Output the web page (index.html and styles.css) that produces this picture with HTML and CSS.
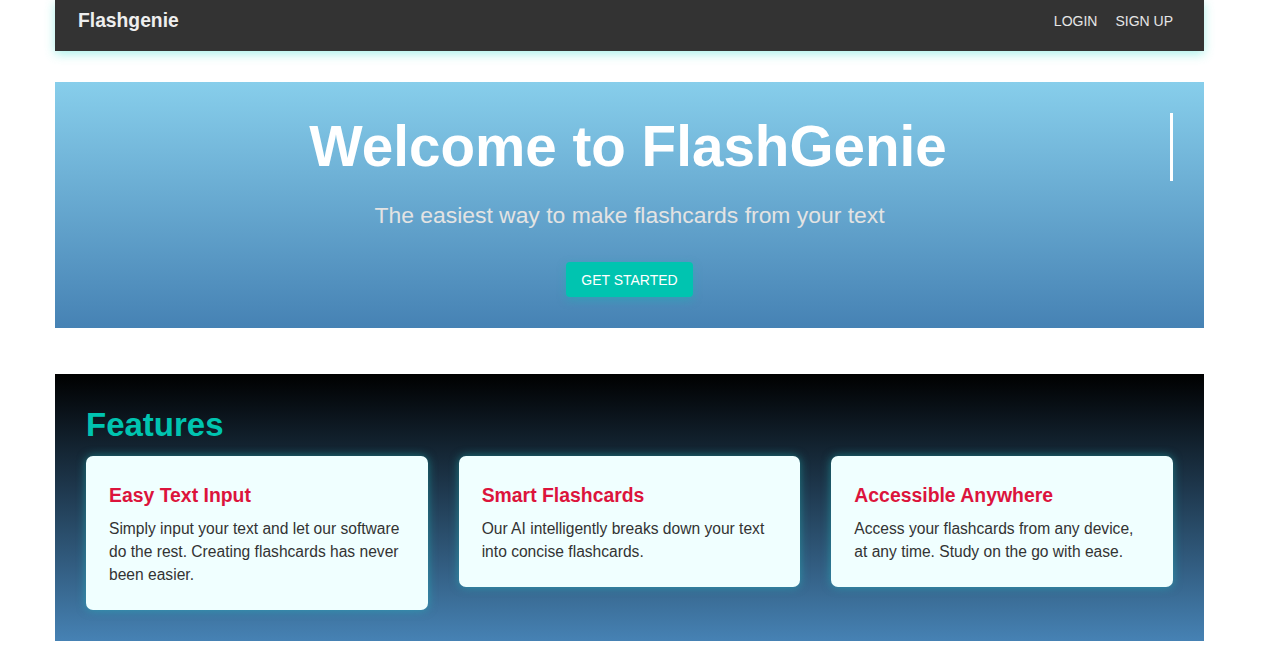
FILE: index.html
```html
<!DOCTYPE html>
<html lang="en">
<head>
<meta charset="utf-8">
<title>Flashgenie</title>
<link rel="stylesheet" href="styles.css">
</head>
<body>
<div class="page">
  <nav class="navbar">
    <div class="brand">Flashgenie</div>
    <div class="nav-links">
      <a href="#" class="nav-link">LOGIN</a>
      <a href="#" class="nav-link">SIGN UP</a>
    </div>
  </nav>

  <header class="hero">
    <h1 class="hero-title">Welcome to FlashGenie</h1>
    <p class="hero-sub">The easiest way to make flashcards from your text</p>
    <a href="#" class="btn">GET STARTED</a>
  </header>

  <section class="features">
    <h2 class="features-title">Features</h2>
    <div class="cards">
      <div class="card">
        <h3 class="card-title">Easy Text Input</h3>
        <p class="card-text">Simply input your text and let our software do the rest. Creating flashcards has never been easier.</p>
      </div>
      <div class="card">
        <h3 class="card-title">Smart Flashcards</h3>
        <p class="card-text">Our AI intelligently breaks down your text into concise flashcards.</p>
      </div>
      <div class="card">
        <h3 class="card-title">Accessible Anywhere</h3>
        <p class="card-text">Access your flashcards from any device, at any time. Study on the go with ease.</p>
      </div>
    </div>
  </section>
</div>
</body>
</html>
```
FILE: styles.css
```css
* { box-sizing: border-box; }

html, body {
  margin: 0;
  padding: 0;
  background: #ffffff;
  font-family: "Liberation Sans", Arial, sans-serif;
}

.page {
  width: 1149px;
  margin: 0 0 0 55px;
  display: flex;
  flex-direction: column;
}

.navbar {
  height: 51px;
  background: #333333;
  display: flex;
  align-items: flex-start;
  justify-content: space-between;
  padding: 10px 31px 0 23px;
  box-shadow: 0 3px 10px rgba(64, 224, 208, 0.45);
  margin-bottom: 31px;
}

.brand {
  color: #eeeeee;
  font-weight: bold;
  font-size: 19.3px;
  line-height: 22px;
}

.nav-links {
  display: flex;
  gap: 18px;
  padding-top: 2px;
}

.nav-link {
  color: #e6e6e6;
  text-decoration: none;
  font-size: 14px;
  line-height: 18px;
}

.hero {
  background: linear-gradient(to bottom, #87ceeb, #4682b4);
  padding: 31px 31px 31px;
  display: flex;
  flex-direction: column;
  align-items: center;
  margin-bottom: 46px;
}

.hero-title {
  align-self: stretch;
  margin: 0;
  text-align: center;
  color: #ffffff;
  font-size: 56.6px;
  line-height: 68px;
  font-weight: bold;
  border-right: 3px solid #ffffff;
}

.hero-sub {
  margin: 21px 0 0;
  color: #e3e3e3;
  font-size: 22.9px;
  line-height: 26px;
}

.btn {
  margin-top: 34px;
  display: inline-block;
  background: #00c4b0;
  color: #ffffff;
  text-decoration: none;
  font-size: 14px;
  line-height: 16px;
  padding: 10px 15px 9px;
  border-radius: 4px;
  box-shadow: 0 3px 10px rgba(0, 196, 176, 0.35);
}

.features {
  background: linear-gradient(to bottom, #000000, #4682b4);
  padding: 32px 31px 31px;
}

.features-title {
  margin: 0 0 13px;
  color: #00c4b0;
  font-size: 33px;
  line-height: 37px;
  font-weight: bold;
}

.cards {
  display: grid;
  grid-template-columns: repeat(3, 1fr);
  gap: 31px;
  align-items: start;
}

.card {
  background: #f0ffff;
  border-radius: 7px;
  padding: 24px 23px 24px;
  box-shadow: 0 0 10px rgba(32, 200, 200, 0.5);
}

.card-title {
  margin: 4px 0 10px;
  color: #dc143c;
  font-size: 19.4px;
  line-height: 23px;
  font-weight: bold;
}

.card-text {
  margin: 0;
  color: #333333;
  font-size: 15.6px;
  line-height: 23px;
}
```
